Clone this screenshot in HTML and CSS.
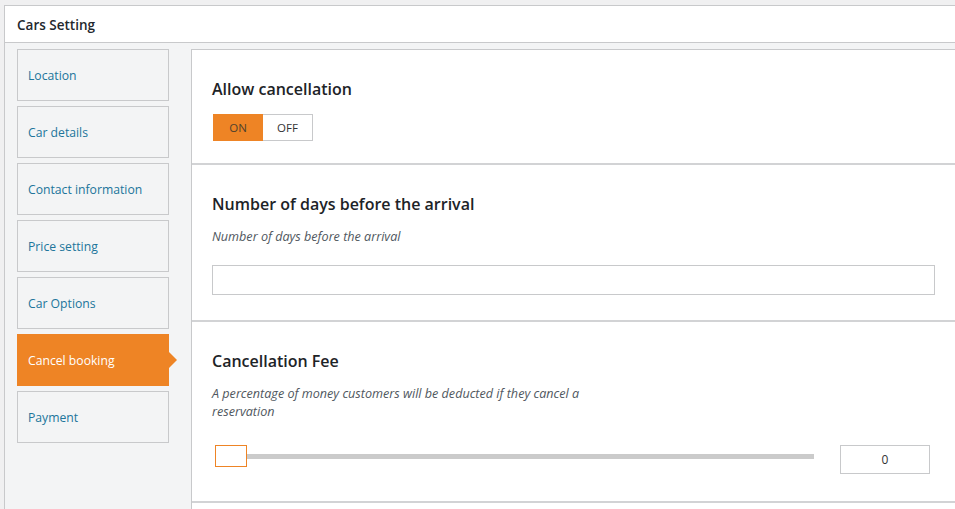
FILE: index.html
```html
<!DOCTYPE html>
<html lang="en">
<head>
    <meta charset="UTF-8">
    <meta name="viewport" content="width=device-width, initial-scale=1.0">
    <title>Cars Setting</title>
    <link rel="stylesheet" href="styles.css">
</head>
<body>
    <div class="settings-box">
        <div class="settings-header">Cars Setting</div>
        <div class="settings-body">
            <ul class="tabs">
                <li class="tab">Location</li>
                <li class="tab">Car details</li>
                <li class="tab">Contact information</li>
                <li class="tab">Price setting</li>
                <li class="tab">Car Options</li>
                <li class="tab active">Cancel booking</li>
                <li class="tab">Payment</li>
            </ul>
            <div class="panel">
                <div class="field field-toggle">
                    <h3 class="field-title">Allow cancellation</h3>
                    <div class="toggle">
                        <span class="toggle-on">ON</span>
                        <span class="toggle-off">OFF</span>
                    </div>
                </div>
                <div class="field field-days">
                    <h3 class="field-title">Number of days before the arrival</h3>
                    <p class="field-desc">Number of days before the arrival</p>
                    <input type="text" class="text-input">
                </div>
                <div class="field field-fee">
                    <h3 class="field-title">Cancellation Fee</h3>
                    <p class="field-desc narrow">A percentage of money customers will be deducted if they cancel a reservation</p>
                    <div class="slider-row">
                        <div class="slider">
                            <span class="slider-handle"></span>
                            <span class="slider-track"></span>
                        </div>
                        <div class="number-box">0</div>
                    </div>
                </div>
            </div>
        </div>
    </div>
</body>
</html>
```

FILE: styles.css
```css
body {
    margin: 0;
    background-color: #f0f0f1;
    font-family: "Open Sans", "Noto Sans", sans-serif;
    color: #23282d;
    overflow: hidden;
    height: 509px;
}

.settings-box {
    box-sizing: border-box;
    width: 952px;
    margin: 5px 0 0 4px;
    border: 1px solid #c8c9cb;
    border-right: none;
    background-color: #f3f4f5;
    height: 520px;
}

.settings-header {
    box-sizing: border-box;
    height: 37px;
    padding: 3px 0 0 12px;
    line-height: 32px;
    background-color: #fff;
    border-bottom: 1px solid #c8c9cb;
    font-size: 13.5px;
    font-weight: 600;
    color: #23282d;
}

.settings-body {
    display: flex;
    align-items: flex-start;
    padding-top: 6px;
}

.tabs {
    list-style: none;
    margin: 0 22px 0 12px;
    padding: 0;
    width: 152px;
    flex-shrink: 0;
}

.tab {
    box-sizing: border-box;
    position: relative;
    height: 52px;
    line-height: 52px;
    margin-bottom: 5px;
    padding-left: 10px;
    border: 1px solid #c8c9cb;
    font-size: 12.2px;
    color: #21759b;
    white-space: nowrap;
}

.tab.active {
    background-color: #ee8425;
    border-color: #ee8425;
    color: #fff;
}

.tab.active::after {
    content: "";
    position: absolute;
    top: 17px;
    right: -9px;
    border-left: 8px solid #ee8425;
    border-top: 8px solid transparent;
    border-bottom: 8px solid transparent;
}

.panel {
    flex: 1;
    background-color: #fff;
    border: 1px solid #c8c9cb;
    min-height: 460px;
}

.field {
    padding: 28px 20px 0 20px;
    border-bottom: 2px solid #d2d3d5;
}

.field-toggle {
    height: 85px;
}

.field-days {
    height: 127px;
}

.field-fee {
    height: 151px;
}

.field-title {
    margin: 0;
    font-size: 16px;
    font-weight: 600;
    line-height: 22px;
    color: #1d2327;
}

.toggle {
    display: flex;
    margin: 14px 0 0 1px;
    font-size: 11.5px;
}

.toggle span {
    box-sizing: border-box;
    width: 50px;
    height: 27px;
    line-height: 25px;
    text-align: center;
}

.toggle-on {
    background-color: #ee8425;
    border: 1px solid #ee8425;
    color: #50422d;
}

.toggle-off {
    background-color: #fff;
    border: 1px solid #c8c9cb;
    border-left: none;
    color: #333;
}

.field-desc {
    margin: 13px 0 0;
    font-size: 12.6px;
    font-style: italic;
    line-height: 18px;
    color: #50575e;
}

.field-desc.narrow {
    max-width: 385px;
}

.text-input {
    display: block;
    box-sizing: border-box;
    width: 100%;
    height: 30px;
    margin-top: 19px;
    border: 1px solid #c8c9cb;
    background: #fff;
}

.slider-row {
    display: flex;
    align-items: flex-start;
    margin-top: 24px;
    padding-right: 5px;
}

.slider {
    flex: 1;
    display: flex;
    align-items: center;
    padding-left: 3px;
}

.slider-handle {
    box-sizing: border-box;
    width: 32px;
    height: 22px;
    border: 1px solid #ee8425;
    background-color: #fff;
}

.slider-track {
    flex: 1;
    height: 5px;
    background-color: #cbcbcb;
}

.number-box {
    box-sizing: border-box;
    width: 90px;
    height: 29px;
    margin-left: 26px;
    border: 1px solid #c8c9cb;
    text-align: center;
    line-height: 27px;
    font-size: 12px;
    color: #333;
}
```
